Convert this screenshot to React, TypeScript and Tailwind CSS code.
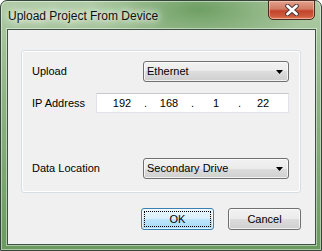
const sans = "font-['Liberation_Sans',Arial,sans-serif]";

const Arrow = () => (
  <svg width="7" height="4" viewBox="0 0 7 4" className="mr-[5px]">
    <path d="M0 0h7L3.5 4z" fill="#000" />
  </svg>
);

const Combo = ({ value }: { value: string }) => (
  <div className="w-[146px] h-[21px] flex items-center justify-between rounded-[3px] border border-[#707070] bg-[linear-gradient(180deg,#f2f2f2_0%,#ebebeb_50%,#dddddd_50%,#cfcfcf_100%)] shadow-[inset_0_0_0_1px_rgba(255,255,255,0.7)]">
    <span className="pl-[3px] text-[11px] text-black leading-none">{value}</span>
    <Arrow />
  </div>
);

const IpBox = ({ parts }: { parts: string[] }) => (
  <div className="w-[193px] h-[20px] flex items-center pl-[3px] bg-white border border-[#e2e3ea] border-t-[#c5c9cf]">
    {parts.map((p, i) => (
      <div key={i} className="flex items-center">
        <span className="w-[44px] text-center text-[11px] leading-none text-black">{p}</span>
        {i < 3 && <span className="w-[3px] text-center text-[11px] leading-none">.</span>}
      </div>
    ))}
  </div>
);

const CloseGlyph = () => (
  <svg width="14" height="12" viewBox="0 0 14 12">
    <path d="M2.5 2l9 8M11.5 2l-9 8" stroke="#4d3434" strokeWidth="4.6" strokeLinecap="round" />
    <path d="M2.5 2l9 8M11.5 2l-9 8" stroke="#fff" strokeWidth="2.8" strokeLinecap="round" />
  </svg>
);

export default function App() {
  return (
    <div className={`w-[322px] h-[251px] flex flex-col rounded-t-[7px] border border-[#34463a] shadow-[inset_0_0_0_1px_rgba(255,255,255,0.45)] bg-[radial-gradient(ellipse_110px_40px_at_62%_8px,#6e9f63,transparent),linear-gradient(180deg,#b0cca6_0%,#8db383_40%,#6a9a5e_100%)] ${sans}`}>
      {/* title bar */}
      <div className="h-[28px] flex items-start justify-between">
        <div className="pl-[7px] pt-[7px] text-[12px] text-[#111] leading-[16px] [text-shadow:0_0_6px_#fff,0_0_10px_#fff,0_0_14px_#e8f2e4]">
          Upload Project From Device
        </div>
        <div className="mr-[6px] mt-[-1px] w-[47px] h-[20px] flex items-center justify-center rounded-b-[5px] border border-[#4a2a24] bg-[linear-gradient(180deg,#e2a18e_0%,#d27a63_45%,#c2442b_55%,#cf5a3c_85%,#e0825f_100%)] shadow-[inset_0_0_0_1px_rgba(255,220,200,0.5)]">
          <CloseGlyph />
        </div>
      </div>

      {/* client area */}
      <div className="ml-[6px] mr-[5px] mb-[5px] flex-1 border border-[#3e5243] shadow-[0_0_0_1px_rgba(255,255,255,0.45)] bg-[#f0f0f0] flex flex-col pl-[13px] pr-[14px] pt-[20px] pb-[14px]">
        <div className="h-[143px] rounded-[3px] border border-[#d5dfe5] shadow-[inset_0_0_0_1px_#fff] flex flex-col pt-[10px] pl-[10px] pr-[10px] pb-[13px]">
          <div className="flex items-center">
            <span className="w-[111px] text-[11px] text-black">Upload</span>
            <Combo value="Ethernet" />
          </div>
          <div className="flex items-center mt-[11px]">
            <span className="w-[64px] text-[11px] text-black">IP Address</span>
            <IpBox parts={["192", "168", "1", "22"]} />
          </div>
          <div className="flex items-center mt-[45px]">
            <span className="w-[111px] text-[11px] text-black">Data Location</span>
            <Combo value="Secondary Drive" />
          </div>
        </div>

        <div className="mt-[15px] flex justify-end gap-[14px]">
          <button className="w-[73px] h-[22px] p-[2px] rounded-[3px] border border-[#3c7fb1] bg-[linear-gradient(180deg,#eaf6fd_0%,#d9f0fc_50%,#bee6fd_50%,#a7d9f5_100%)] shadow-[inset_0_0_0_1px_rgba(255,255,255,0.6)]">
            <div className="w-full h-full border border-dotted border-black flex items-center justify-center text-[11px] text-black leading-none">
              OK
            </div>
          </button>
          <button className="w-[73px] h-[22px] rounded-[3px] border border-[#707070] bg-[linear-gradient(180deg,#f2f2f2_0%,#ebebeb_50%,#dddddd_50%,#cfcfcf_100%)] shadow-[inset_0_0_0_1px_rgba(255,255,255,0.7)] flex items-center justify-center text-[11px] text-black leading-none">
            Cancel
          </button>
        </div>
      </div>
    </div>
  );
}
